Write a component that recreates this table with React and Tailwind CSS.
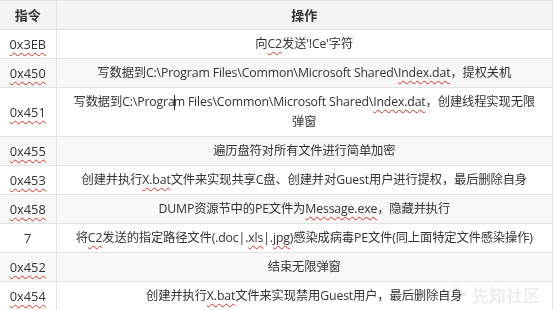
import React from 'react'

// spell-check style squiggle
function Sq({ children }) {
  return (
    <span className="underline decoration-wavy decoration-[#e0302a] decoration-1 underline-offset-[3px] [text-decoration-skip-ink:none]">
      {children}
    </span>
  )
}

const rows = [
  { code: <Sq>0x3EB</Sq>, op: <>向<Sq>C2</Sq>发送'!Ce'字符</> },
  { code: <Sq>0x450</Sq>, op: <>写数据到C:\Program Files\Common\Microsoft Shared\<Sq>Index.dat</Sq>，提权关机</> },
  {
    code: <Sq>0x451</Sq>,
    op: (
      <>
        写数据到C:\Progra<span className="inline-block w-px h-[15px] bg-[#333] align-middle -mx-px" />m Files\Common\Microsoft Shared\<Sq>Index.dat</Sq>，创建线程实现无限<br />弹窗
      </>
    ),
  },
  { code: <Sq>0x455</Sq>, op: <>遍历盘符对所有文件进行简单加密</> },
  { code: <Sq>0x453</Sq>, op: <>创建并执行<Sq>X.bat</Sq>文件来实现共享C盘、创建并对Guest用户进行提权，最后删除自身</> },
  { code: <Sq>0x458</Sq>, op: <>DUMP资源节中的PE文件为<Sq>Message.exe</Sq>，隐藏并执行</> },
  { code: '7', op: <>将<Sq>C2</Sq>发送的指定路径文件(.doc|.<Sq>xls</Sq>|.<Sq>jpg</Sq>)感染成病毒PE文件(同上面特定文件感染操作)</> },
  { code: <Sq>0x452</Sq>, op: <>结束无限弹窗</> },
  { code: <Sq>0x454</Sq>, op: <>创建并执行<Sq>X.bat</Sq>文件来实现禁用Guest用户，最后删除自身</> },
]

export default function App() {
  return (
    <div
      className="relative w-[554px] h-[310px] overflow-hidden bg-white text-[12.3px] leading-[20px] text-[#333]"
      style={{ fontFamily: '"Open Sans", "Noto Sans CJK SC", sans-serif' }}
    >
      <table className="w-[553px] border-collapse table-fixed">
        <colgroup>
          <col className="w-[56px]" />
          <col />
        </colgroup>
        <thead>
          <tr className="bg-[#f4f4f4]">
            <th className="border border-[#e3e3e3] border-l-0 py-[4px] text-[13px] font-bold text-center">指令</th>
            <th className="border border-[#e3e3e3] py-[4px] text-[13px] font-bold text-center">操作</th>
          </tr>
        </thead>
        <tbody>
          {rows.map((r, i) => (
            <tr key={i} className={i % 2 === 1 ? 'bg-[#f8f8f8]' : 'bg-white'}>
              <td className="border border-[#e3e3e3] border-l-0 py-[4px] text-[12.8px] text-center">{r.code}</td>
              <td className="border border-[#e3e3e3] px-1 py-[4px] text-center tracking-[-0.15px] whitespace-nowrap">
                {r.op}
              </td>
            </tr>
          ))}
        </tbody>
      </table>
      <div
        className="absolute left-[452px] top-[285px] flex items-center gap-1 text-[17px] leading-none font-bold text-[#eeeeee] mix-blend-multiply pointer-events-none"
        style={{ fontFamily: '"Noto Sans CJK SC", sans-serif' }}
      >
        <svg width="16" height="18" viewBox="0 0 16 18" fill="none" stroke="#eeeeee" strokeWidth="2.5">
          <path d="M3 2v14M3 2l10 7-10 7" />
        </svg>
        先知社区
      </div>
    </div>
  )
}
